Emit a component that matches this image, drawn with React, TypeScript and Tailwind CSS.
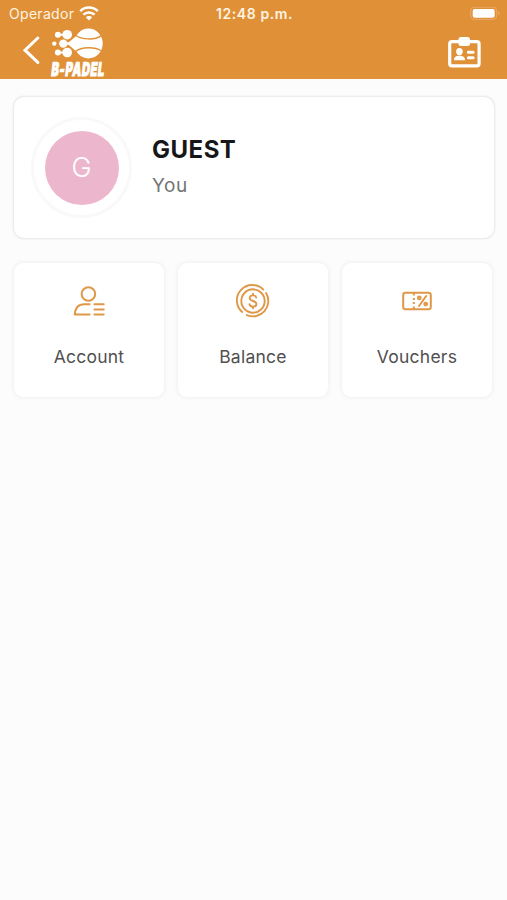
import type { ReactNode } from 'react';

function StatusBar() {
  return (
    <div className="grid h-[27px] grid-cols-3 items-center pl-[9px] pr-[6px] text-[14px] leading-none text-[#fff3e2]">
      <div className="flex items-center gap-[5px]">
        <span className="tracking-[0.3px]">Operador</span>
        <svg width="20" height="15" viewBox="0 0 20 15" fill="none" stroke="#fff" strokeWidth="2.5">
          <path d="M1.2 5.2a12.6 12.6 0 0 1 17.6 0" />
          <path d="M4.4 8.7a8 8 0 0 1 11.2 0" />
          <path d="M6.8 11.2a4.6 4.6 0 0 1 6.4 0L10 14.4z" fill="#fff" stroke="none" />
        </svg>
      </div>
      <span className="-ml-px whitespace-nowrap text-center font-semibold tracking-[0.6px]">12:48 p.m.</span>
      <svg className="justify-self-end" width="31" height="14" viewBox="0 0 31 14">
        <rect x=".7" y=".2" width="26" height="12.2" rx="3.6" fill="none" stroke="#e9ac69" strokeWidth="1" />
        <rect x="2.7" y="2" width="22" height="8.7" rx="2" fill="#fff" />
        <path d="M28.4 4.3v4c1.7-.6 1.7-3.4 0-4z" fill="#e9ac69" />
      </svg>
    </div>
  );
}

function Logo() {
  return (
    <svg className="overflow-visible" width="66" height="56" viewBox="0 0 66 56" fill="#fff">
      <ellipse cx="38.5" cy="15.5" rx="14.2" ry="15" />
      <path d="M15 15.6c4-.4 6.5-4 11-7.4v15c-4.5-3.4-7-7-11-7.6z" />
      <circle cx="17.2" cy="6.7" r="4.8" />
      <circle cx="13.3" cy="15.6" r="4.2" />
      <circle cx="17.2" cy="24.5" r="4.8" />
      <circle cx="7.9" cy="6.7" r="3" />
      <circle cx="4.3" cy="15.6" r="2.2" />
      <circle cx="7.9" cy="24.5" r="3" />
      <path d="M7 6.7h8M7 24.5h8M11 15.6h8" stroke="#fff" strokeWidth="2" />
      <path d="M25.5 7.2c6 4.7 19.5 5 25.5.7M25.5 23.4c6-4.6 19.5-4.8 25.5-.6" fill="none" stroke="#e09137" strokeWidth="1.4" />
      <text
        x="1"
        y="47.6"
        textLength="53.5"
        lengthAdjust="spacingAndGlyphs"
        transform="translate(5.6 0) skewX(-7)"
        className="font-['Inter',sans-serif] text-[19px] font-black tracking-[1px]"
        stroke="#fff"
        strokeWidth="0.9"
      >
        B-PADEL
      </text>
    </svg>
  );
}

function BadgeIcon() {
  return (
    <svg width="33" height="31" viewBox="0 0 33 31" fill="#fff">
      <rect x="1.7" y="4.7" width="29.4" height="24.2" rx="2.3" fill="none" stroke="#fff" strokeWidth="3.2" />
      <rect x="10.5" y="0" width="11.5" height="9" rx="2.5" />
      <ellipse cx="11.4" cy="14.6" rx="3.3" ry="3.6" />
      <path d="M5.9 23.3c0-3.6 2.2-4.6 5.5-4.6s5.6 1 5.6 4.6z" />
      <path d="M20.4 15.2h4.7M20.4 20.7h4.7" stroke="#fff" strokeWidth="3.1" strokeLinecap="round" />
    </svg>
  );
}

function AccountIcon() {
  return (
    <svg width="32" height="31" viewBox="0 0 32 31" fill="none" stroke="#e09848" strokeWidth="2" strokeLinecap="round" strokeLinejoin="round">
      <circle cx="15.4" cy="8" r="6.8" />
      <path d="M16.6 18.2h-5.2C5.7 18.2 2.2 22 1.8 28.5h14.8" />
      <path d="M21.4 18.2h9.3M21.4 23.4h9.3M21.4 28.5h9.3" />
    </svg>
  );
}

function BalanceIcon() {
  return (
    <svg width="34" height="34" viewBox="0 0 34 34" fill="none" stroke="#e09848" strokeWidth="1.9" strokeLinecap="round">
      <circle cx="17" cy="17" r="11.7" />
      <path d="M27.3 5.6A15.4 15.4 0 1 0 6.2 28" />
      <path d="M30.1 9A15.4 15.4 0 0 1 10.8 31.1" />
      <path d="M20.2 13.6c-.2-1.4-1.4-2.2-3.2-2.2-2 0-3.3 1-3.3 2.6 0 4 6.7 2 6.7 6 0 1.6-1.4 2.6-3.4 2.6-1.9 0-3.2-.9-3.5-2.4M17 9.7v1.7M17 22.6v1.7" />
    </svg>
  );
}

function VoucherIcon() {
  return (
    <svg width="30" height="20" viewBox="0 0 30 20" fill="none" stroke="#e09848" strokeWidth="2">
      <rect x="1.2" y="1.8" width="27.6" height="16.4" rx="2.2" />
      <path d="M11.8 2v2.6M11.8 7v2M11.8 11v2M11.8 15.4V18" />
      <path d="m17 15 7.2-10" strokeLinecap="round" />
      <circle cx="17.3" cy="6.9" r="1.4" />
      <circle cx="23.7" cy="13.1" r="1.4" />
    </svg>
  );
}

function Tile({ icon, label }: { icon: ReactNode; label: string }) {
  return (
    <button className="flex h-[134px] flex-col items-center rounded-[9px] bg-white pt-[16px] shadow-[0_0_4px_1px_rgba(0,0,0,0.055)]">
      <span className="flex h-[44px] items-center justify-center">{icon}</span>
      <span className="mt-[21px] text-[17.5px] leading-[26px] tracking-[0.25px] text-[#505050]">{label}</span>
    </button>
  );
}

export default function App() {
  return (
    <div className="min-h-[900px] bg-[#fcfcfc] font-['Inter',sans-serif]">
      <header className="h-[79px] bg-[#e09137]">
        <StatusBar />
        <div className="flex items-start justify-between pl-[22px] pr-[26px]">
          <div className="flex items-start gap-[10px]">
            <button aria-label="Back" className="mt-[9px]">
              <svg width="18" height="28" viewBox="0 0 18 28" fill="none" stroke="#fff" strokeWidth="3" strokeLinecap="round">
                <path d="M15.8 2 3 14.2l12.8 12.2" />
              </svg>
            </button>
            <div className="mt-px">
              <Logo />
            </div>
          </div>
          <button aria-label="Member card" className="mt-[10px]">
            <BadgeIcon />
          </button>
        </div>
      </header>

      <main className="pt-[18px]">
        <section className="mx-[14px] mr-[13px] flex h-[141px] items-center rounded-[10px] bg-white pl-[17px] shadow-[0_0_2px_1px_rgba(0,0,0,0.09)]">
          <div className="flex size-[101px] items-center justify-center rounded-full border-[3px] border-[#f9f9f9]">
            <div className="flex size-[74px] items-center justify-center rounded-full bg-[#ecb7cd] pt-[2px] text-[27px] font-light text-white">
              G
            </div>
          </div>
          <div className="ml-[20px] pt-px">
            <h1 className="text-[24px] font-bold leading-8 tracking-[0.5px] text-[#17171a]">GUEST</h1>
            <p className="mt-[4px] text-[19px] leading-8 tracking-[0.6px] text-[#747474]">You</p>
          </div>
        </section>

        <div className="mt-[25px] grid grid-cols-3 gap-[14px] pl-[14px] pr-[15px]">
          <Tile icon={<AccountIcon />} label="Account" />
          <Tile icon={<BalanceIcon />} label="Balance" />
          <Tile icon={<VoucherIcon />} label="Vouchers" />
        </div>
      </main>
    </div>
  );
}
